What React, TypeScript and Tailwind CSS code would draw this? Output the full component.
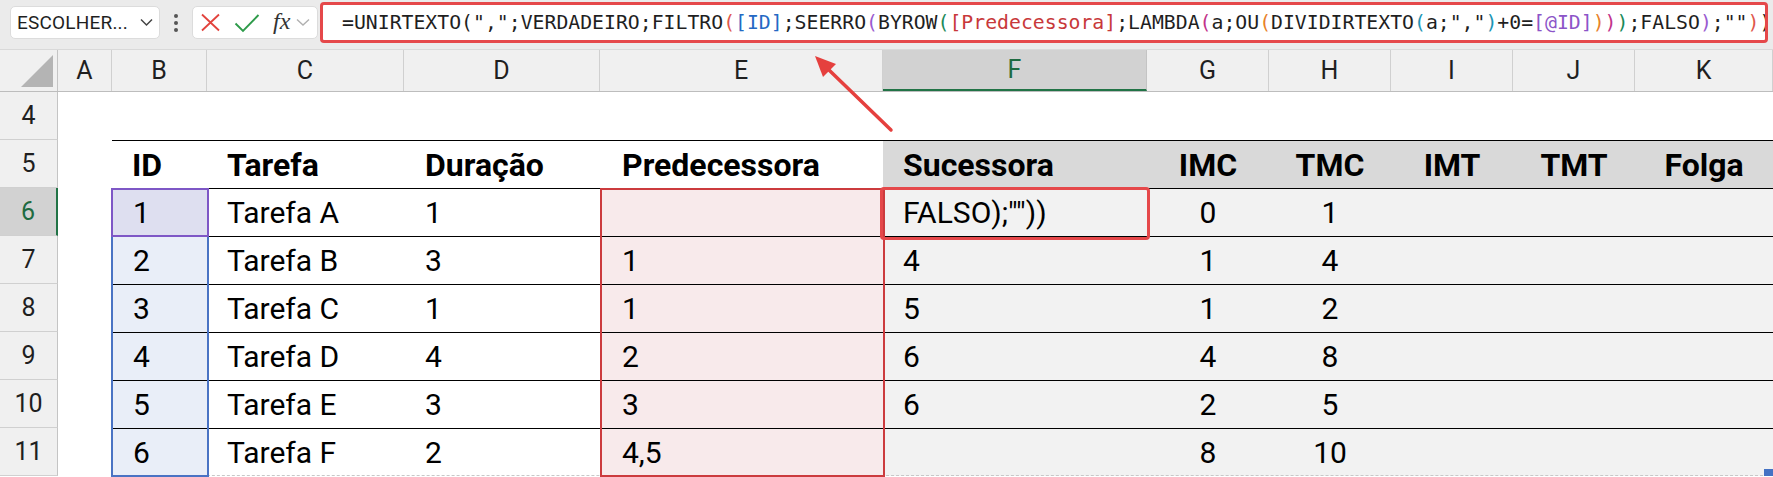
import React from "react";

const COLS = [
  { l: "A", w: "w-[54px]" },
  { l: "B", w: "w-[95px]" },
  { l: "C", w: "w-[197px]" },
  { l: "D", w: "w-[196px]" },
  { l: "E", w: "w-[283px]" },
  { l: "F", w: "w-[264px]" },
  { l: "G", w: "w-[122px]" },
  { l: "H", w: "w-[122px]" },
  { l: "I", w: "w-[122px]" },
  { l: "J", w: "w-[122px]" },
  { l: "K", w: "w-[138px]" },
];

const K = "text-[#1f1f1f]";
const formula: [string, string][] = [
  ["=UNIRTEXTO(", K],
  ['",";VERDADEIRO;FILTRO', K],
  ["(", "text-[#e0584c]"],
  ["[ID]", "text-[#2469c4]"],
  [";SEERRO", K],
  ["(", "text-[#9a5bd0]"],
  ["BYROW", K],
  ["(", "text-[#1b8a5a]"],
  ["[Predecessora]", "text-[#c8383a]"],
  [";LAMBDA", K],
  ["(", "text-[#c2338a]"],
  ["a;OU", K],
  ["(", "text-[#e8822a]"],
  ["DIVIDIRTEXTO", K],
  ["(", "text-[#1e95b5]"],
  ['a;","', K],
  [")", "text-[#1e95b5]"],
  ["+0=", K],
  ["[@ID]", "text-[#8c55c8]"],
  [")", "text-[#e8822a]"],
  [")", "text-[#c2338a]"],
  [")", "text-[#1b8a5a]"],
  [";FALSO", K],
  [")", "text-[#9a5bd0]"],
  [';""', K],
  [")", "text-[#e0584c]"],
  [")", K],
];

const rows = [
  { id: "1", t: "Tarefa A", d: "1", p: "", s: 'FALSO);""))', imc: "0", tmc: "1" },
  { id: "2", t: "Tarefa B", d: "3", p: "1", s: "4", imc: "1", tmc: "4" },
  { id: "3", t: "Tarefa C", d: "1", p: "1", s: "5", imc: "1", tmc: "2" },
  { id: "4", t: "Tarefa D", d: "4", p: "2", s: "6", imc: "4", tmc: "8" },
  { id: "5", t: "Tarefa E", d: "3", p: "3", s: "6", imc: "2", tmc: "5" },
  { id: "6", t: "Tarefa F", d: "2", p: "4,5", s: "", imc: "8", tmc: "10" },
];

function RowHdr({ n, sel }: { n: number; sel?: boolean }) {
  return (
    <div
      className={
        sel
          ? "w-[58px] h-full shrink-0 flex items-center justify-center bg-[#d2d2d2] text-[#1e6b41] border-r-2 border-r-[#217346] border-b border-b-[#d0d0d0] text-[25px]"
          : "w-[58px] h-full shrink-0 flex items-center justify-center bg-[#f0f0f0] text-[#1f1f1f] border-r border-r-[#c4c4c4] border-b border-b-[#d0d0d0] text-[25px]"
      }
    >
      {n}
    </div>
  );
}

export default function App() {
  return (
    <div className="relative w-[1773px] h-[477px] overflow-hidden bg-white font-['Roboto',sans-serif]">
      {/* Formula bar */}
      <div className="h-[50px] bg-[#ebebeb] flex items-start border-b border-b-[#d9d9d9]">
        <div className="ml-[10px] mt-[6px] w-[150px] h-[33px] bg-white rounded-[5px] border border-[#dcdcdc] flex items-center pl-[6px] pr-[6px]">
          <span className="text-[19px] text-[#1f1f1f] leading-none tracking-[0.2px]">ESCOLHER...</span>
          <svg className="ml-auto" width="13" height="9" viewBox="0 0 13 9">
            <path d="M1 1.5 L6.5 7 L12 1.5" fill="none" stroke="#444" strokeWidth="1.5" />
          </svg>
        </div>
        <div className="w-[32px] h-[45px] flex flex-col items-center justify-center gap-[3px]">
          <div className="w-[4px] h-[4px] rounded-full bg-[#555]" />
          <div className="w-[4px] h-[4px] rounded-full bg-[#555]" />
          <div className="w-[4px] h-[4px] rounded-full bg-[#555]" />
        </div>
        <div className="mt-[6px] w-[126px] h-[33px] bg-white rounded-[5px] border border-[#dcdcdc] flex items-center pl-[7px]">
          <svg width="21" height="19" viewBox="0 0 21 19">
            <path d="M2 1.5 L19 17.5 M19 1.5 L2 17.5" stroke="#e2433d" strokeWidth="1.8" fill="none" />
          </svg>
          <svg className="ml-[13px]" width="26" height="20" viewBox="0 0 26 20">
            <path d="M1.5 10.5 L9 18 L24.5 2" stroke="#2e9b4a" strokeWidth="1.9" fill="none" />
          </svg>
          <span className="ml-[13px] font-['Liberation_Serif',serif] italic text-[24px] leading-none text-[#333] -mt-[3px]">fx</span>
          <svg className="ml-[6px]" width="14" height="9" viewBox="0 0 14 9">
            <path d="M1 1.5 L7 7 L13 1.5" fill="none" stroke="#b0b0b0" strokeWidth="1.4" />
          </svg>
        </div>
        <div className="ml-[2px] mt-[2px] w-[1448px] h-[41px] bg-white rounded-[4px] border-[3px] border-[#e5484a] flex items-center pl-[19px] overflow-hidden">
          <span className="font-['DejaVu_Sans_Mono',monospace] text-[19.8px] whitespace-pre leading-none">
            {formula.map(([t, c], i) => (
              <span key={i} className={c}>
                {t}
              </span>
            ))}
          </span>
        </div>
      </div>

      {/* Column headers */}
      <div className="h-[42px] flex bg-[#f0f0f0] border-b border-b-[#bdbdbd]">
        <div className="w-[58px] h-full shrink-0 relative border-r border-r-[#c4c4c4]">
          <svg className="absolute right-[4px] bottom-[4px]" width="32" height="32" viewBox="0 0 32 32">
            <polygon points="32,0 32,32 0,32" fill="#b4b4b4" />
          </svg>
        </div>
        {COLS.map((c) =>
          c.l === "F" ? (
            <div
              key={c.l}
              className={`${c.w} h-full shrink-0 flex items-center justify-center bg-[#d2d2d2] text-[#1e6b41] text-[25px] border-b-2 border-b-[#217346] border-r border-r-[#c4c4c4]`}
            >
              {c.l}
            </div>
          ) : (
            <div
              key={c.l}
              className={`${c.w} h-full shrink-0 flex items-center justify-center text-[#1f1f1f] text-[25px] border-r border-r-[#d0d0d0]`}
            >
              {c.l}
            </div>
          )
        )}
      </div>

      {/* Row 4 */}
      <div className="h-[48px] flex">
        <RowHdr n={4} />
        <div className="flex-1" />
      </div>

      {/* Row 5 : table header */}
      <div className="h-[48px] flex">
        <RowHdr n={5} />
        <div className="w-[54px] shrink-0" />
        <div className="flex-1 flex border-t-[1.5px] border-t-black font-bold text-[32px] text-black">
          <div className="w-[95px] shrink-0 flex items-center pl-[20px]">ID</div>
          <div className="w-[197px] shrink-0 flex items-center pl-[20px]">Tarefa</div>
          <div className="w-[196px] shrink-0 flex items-center pl-[21px]">Duração</div>
          <div className="w-[283px] shrink-0 flex items-center pl-[22px]">Predecessora</div>
          <div className="flex-1 flex bg-[#d9d9d9]">
            <div className="w-[264px] shrink-0 flex items-center pl-[20px]">Sucessora</div>
            <div className="w-[122px] shrink-0 flex items-center justify-center">IMC</div>
            <div className="w-[122px] shrink-0 flex items-center justify-center">TMC</div>
            <div className="w-[122px] shrink-0 flex items-center justify-center">IMT</div>
            <div className="w-[122px] shrink-0 flex items-center justify-center">TMT</div>
            <div className="w-[138px] shrink-0 flex items-center justify-center">Folga</div>
          </div>
        </div>
      </div>

      {/* Data rows */}
      {rows.map((r, i) => (
        <div key={r.id} className="h-[48px] flex">
          <RowHdr n={6 + i} sel={i === 0} />
          <div className="w-[54px] shrink-0" />
          <div className="flex-1 flex border-t-[1.5px] border-t-black text-[30px] text-black">
            <div
              className={
                i === 0
                  ? "w-[95px] shrink-0 flex items-center pl-[21px] bg-[#dedff0]"
                  : "w-[95px] shrink-0 flex items-center pl-[21px] bg-[#e9eef8]"
              }
            >
              {r.id}
            </div>
            <div className="w-[197px] shrink-0 flex items-center pl-[20px]">{r.t}</div>
            <div className="w-[196px] shrink-0 flex items-center pl-[21px]">{r.d}</div>
            <div className="w-[283px] shrink-0 flex items-center pl-[22px] bg-[#f8eaeb]">{r.p}</div>
            <div className="flex-1 flex bg-[#f2f2f2]">
              <div className="w-[264px] shrink-0 flex items-center pl-[20px]">{r.s}</div>
              <div className="w-[122px] shrink-0 flex items-center justify-center">{r.imc}</div>
              <div className="w-[122px] shrink-0 flex items-center justify-center">{r.tmc}</div>
              <div className="w-[122px] shrink-0" />
              <div className="w-[122px] shrink-0" />
              <div className="w-[138px] shrink-0" />
            </div>
          </div>
        </div>
      ))}

      {/* Page-break marker under the table */}
      <div className="absolute left-[112px] top-[475px] w-[1661px] border-t border-dashed border-t-[#c8c8c8] pointer-events-none" />

      {/* Range highlight overlays */}
      <div className="absolute left-[111px] top-[188px] w-[98px] h-[289px] border-2 border-[#4a73c4] pointer-events-none" />
      <div className="absolute left-[111px] top-[188px] w-[98px] h-[49px] border-2 border-[#7e57c6] pointer-events-none" />
      <div className="absolute left-[600px] top-[188px] w-[285px] h-[289px] border-2 border-[#cc3b3e] pointer-events-none" />
      <div className="absolute left-[880px] top-[187px] w-[270px] h-[53px] border-[3px] border-[#e5484a] rounded-[4px] pointer-events-none" />
      <div className="absolute left-[1764px] top-[469px] w-[9px] h-[7px] bg-[#4472c4] pointer-events-none" />

      {/* Arrow */}
      <svg className="absolute left-0 top-0 pointer-events-none" width="1773" height="477" viewBox="0 0 1773 477">
        <line x1="891" y1="130" x2="829" y2="70" stroke="#e5403e" strokeWidth="3.5" strokeLinecap="round" />
        <polygon points="815,56 836,64 823,77" fill="#e5403e" />
      </svg>
    </div>
  );
}
